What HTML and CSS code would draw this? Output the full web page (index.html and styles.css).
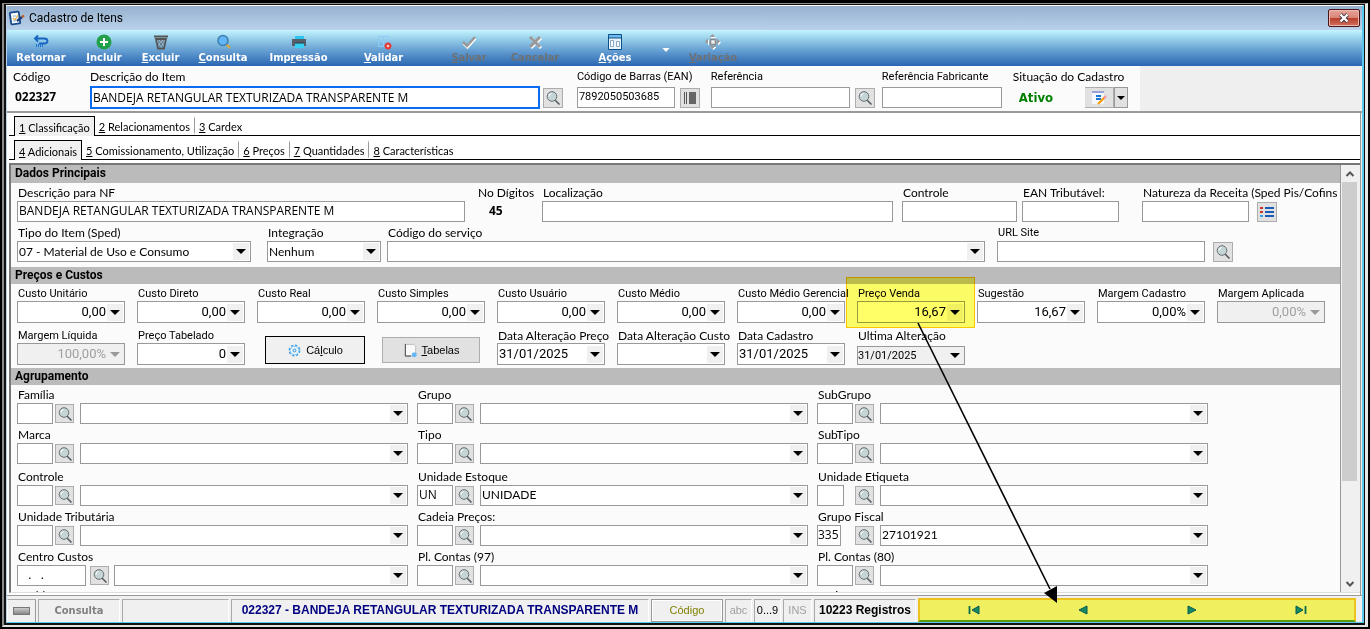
FILE: index.html
```
<!DOCTYPE html>
<html lang="pt-BR">
<head>
<meta charset="utf-8">
<title>Cadastro de Itens</title>
<link rel="stylesheet" href="styles.css">
</head>
<body>
<svg class="defs" aria-hidden="true">
  <symbol id="lens" viewBox="0 0 16 16">
    <path d="M10 10l4.500 4.500" stroke="#50585c" stroke-width="1.500"/>
    <circle cx="7" cy="6.500" r="4.800" fill="#c5d5d6" stroke="#666e70"/>
    <path d="M4 6.500q0-2.500 2.500-3" stroke="#fff" fill="none"/>
  </symbol>
</svg>
<div class="frame">
<div class="window">
  <header class="titlebar">
    <svg class="app-icon" viewBox="0 0 16 16"><rect x="1.500" y="2" width="9" height="12" rx="1" fill="#fff" stroke="#174a8c" stroke-width="1.800" transform="rotate(-8 6 8)"/><path d="M4 8l2 2 3-5" stroke="#e0b040" fill="none" stroke-width="1.200"/><path d="M4 6h3M4 11h3" stroke="#7ab4e6"/><path d="M8 11l5-4" stroke="#1c3f78" stroke-width="2.500"/><path d="M13 7l2-1.500" stroke="#c4612a" stroke-width="2.500"/></svg>
    <h1>Cadastro de Itens</h1>
    <button class="close" aria-label="Fechar"><svg viewBox="0 0 12 10"><path d="M2.500 1.500l7 7M9.500 1.500l-7 7" stroke="#4a3a48" stroke-width="4"/><path d="M2.500 1.500l7 7M9.500 1.500l-7 7" stroke="#fff" stroke-width="2.200"/></svg></button>
  </header>

  <nav class="toolbar">
    <button class="tool w-64"><svg viewBox="0 0 16 16"><path d="M5 1.500L2 4.500l3 3M2 4.500h9q3.500 0 3.500 2.500T11 9.500H6" fill="none" stroke="#1565c0" stroke-width="1.800"/><path d="M3.500 10v3M5.500 10v3M7.500 10v3M9.500 10v3" stroke="#1d6fd0"/></svg><span>Retornar</span></button>
    <button class="tool w-62"><svg viewBox="0 0 16 16"><circle cx="8" cy="8" r="7.500" fill="#23a04a"/><path d="M8 4v8M4 8h8" stroke="#fff" stroke-width="2"/></svg><span><u>I</u>ncluir</span></button>
    <button class="tool w-51"><svg viewBox="0 0 16 16"><path d="M1 2.500h14M3 5l2 9.500h6L13 5z" fill="none" stroke="#555" stroke-width="1.800"/><path d="M5 6l5 7M8 6l3 4M11 6l-5 7M8 6l-3 4" stroke="#777"/></svg><span><u>E</u>xcluir</span></button>
    <button class="tool w-74"><svg viewBox="0 0 16 16"><path d="M11 10l4 4" stroke="#d8a93c" stroke-width="2.200"/><circle cx="8" cy="6.500" r="5" fill="#62b5f6" stroke="#3f7fae" stroke-width="1.500"/></svg><span><u>C</u>onsulta</span></button>
    <button class="tool w-77"><svg viewBox="0 0 16 16"><path d="M4 2h9v4H4z" fill="#29c5ee"/><path d="M1 5h14v7H1z" fill="#55606a"/><path d="M4 9h9v5H4z" fill="#37d0f3"/><path d="M4 9h9" stroke="#2d3940"/></svg><span>Imp<u>r</u>essão</span></button>
    <button class="tool w-93"><svg viewBox="0 0 16 16"><path d="M2.500 2.500h5v5h-5zM7.500 2.500h5v5h-5zM2.500 7.500h5v5h-5z" fill="none" stroke="#90caf9"/><path d="M12 8.500v7M8.500 12h7M9.500 9.500l5 5M14.500 9.500l-5 5" stroke="#e53935" stroke-width="2"/><circle cx="12" cy="12" r="1.300" fill="#ffcbc5"/></svg><span><u>V</u>alidar</span></button>
    <button class="tool w-78" disabled><svg viewBox="0 0 16 16"><path d="M2.500 9.500l4 4 8-9" fill="none" stroke="#fff" stroke-width="2.500"/><path d="M2 8l4 4 8-9" fill="none" stroke="#999" stroke-width="2.500"/></svg><span><u>S</u>alvar</span></button>
    <button class="tool w-54" disabled><svg viewBox="0 0 16 16"><path d="M4 4l10 10M14 4L4 14" stroke="#fff" stroke-width="3"/><path d="M3 3l10 10M13 3L3 13" stroke="#999" stroke-width="3"/></svg><span>Cancelar</span></button>
    <button class="tool w-106"><svg viewBox="0 0 16 16"><path d="M1.500 .5h13v15h-13z" fill="#e9f4fd" stroke="#0b4f87"/><path d="M2 1h12v3H2z" fill="#70b9f0"/><path d="M1 4h14" stroke="#0b4f87"/><path d="M3.500 6.500h3v6h-3zM9.500 7.500h3v5h-3z" fill="#fff" stroke="#89a9c2"/></svg><span><u>A</u>ções</span></button>
    <button class="caret" aria-label="Mais ações"></button>
    <button class="tool w-82" disabled><svg viewBox="0 0 16 16"><path d="M8.500 1l3 3h-6zM8.500 16l3-3h-6zM1 8.500l3-3v6zM16 8.500l-3-3v6z" fill="#fff"/><path d="M7.500 0l3 3h-6zM7.500 15l3-3h-6zM0 7.500l3-3v6zM15 7.500l-3-3v6z" fill="#999"/><path d="M5.500 5.500h5v5h-5z" fill="#eee" stroke="#8a8a8a" stroke-width="1.500"/></svg><span><u>V</u>ariação</span></button>
  </nav>

  <section class="item-head">
    <div class="head-grid">
      <div class="field"><span class="label">Código</span><strong class="code">022327</strong></div>
      <div class="field pr-14"><label for="desc">Descrição do Item</label><div class="line gap-3"><input id="desc" class="grow focus" value="BANDEJA RETANGULAR TEXTURIZADA TRANSPARENTE M"><button class="icon-btn" aria-label="Buscar"><svg><use href="#lens"/></svg></button></div></div>
      <div class="field pr-11"><label for="ean" class="tah">Código de Barras (EAN)</label><div class="line gap-5"><input id="ean" class="grow small" value="7892050503685"><button class="icon-btn" aria-label="Código de barras"><svg viewBox="0 0 16 16"><path d="M2.500 2v12M4.500 2v12" stroke="#555"/><path d="M7 2h7v12H7z" fill="#666"/></svg></button></div></div>
      <div class="field pr-7"><label for="ref" class="tah">Referência</label><div class="line gap-5"><input id="ref" class="grow"><button class="icon-btn" aria-label="Buscar"><svg><use href="#lens"/></svg></button></div></div>
      <div class="field pr-10"><label for="fab" class="tah">Referência Fabricante</label><input id="fab"></div>
      <div class="field pr-12"><span class="label">Situação do Cadastro</span><div class="line status-line"><strong class="active">Ativo</strong><button class="edit-btn" aria-label="Alterar"><svg viewBox="0 0 16 16"><path d="M1 1h12v13H1z" fill="#f3f6fb"/><path d="M1 2h12" stroke="#3f51b5"/><path d="M5 6h5M5 9h5" stroke="#1976d2" stroke-width="2"/><path d="M7 14l7-7" stroke="#ff9800" stroke-width="2"/><path d="M13 8l2-2" stroke="#f48fb1" stroke-width="2"/></svg></button><button class="drop-btn" aria-label="Opções"></button></div></div>
    </div>
  </section>

  <div class="body">
    <nav class="tabs"><button class="tab on"><u>1</u> Classificação</button><button class="tab"><u>2</u> Relacionamentos</button><button class="tab"><u>3</u> Cardex</button></nav>
    <nav class="tabs second"><button class="tab on"><u>4</u> Adicionais</button><button class="tab"><u>5</u> Comissionamento, Utilização</button><button class="tab"><u>6</u> Preços</button><button class="tab"><u>7</u> Quantidades</button><button class="tab"><u>8</u> Características</button></nav>

    <div class="panel">
      <form class="sheet">
        <h2 class="tall">Dados Principais</h2>
        <div class="rows main-rows">
          <div class="row r-main">
            <div class="field pr-12"><label for="nf">Descrição para NF</label><input id="nf" value="BANDEJA RETANGULAR TEXTURIZADA TRANSPARENTE M"></div>
            <div class="field"><span class="label">No Dígitos</span><strong class="digits">45</strong></div>
            <div class="field pr-9"><label for="loc">Localização</label><input id="loc"></div>
            <div class="field pr-5"><label for="ctl">Controle</label><input id="ctl"></div>
            <div class="field pr-23"><label for="eant">EAN Tributável:</label><input id="eant"></div>
            <div class="field pr-63"><label for="nat">Natureza da Receita (Sped Pis/Cofins</label><div class="line gap-8"><input id="nat" class="grow"><button type="button" class="icon-btn" aria-label="Lista"><svg viewBox="0 0 16 16"><path d="M6 4h9M6 8h9M6 12h9" stroke="#1a5cb8" stroke-width="2"/><path d="M1 4h3M1 8h3" stroke="#cc3322" stroke-width="2"/><path d="M1 12h3" stroke="#33a1e8" stroke-width="2"/></svg></button></div></div>
          </div>
          <div class="row r-type">
            <div class="field pr-16"><label for="tipo">Tipo do Item (Sped)</label><select id="tipo" class="txt"><option>07 - Material de Uso e Consumo</option></select></div>
            <div class="field pr-6"><label for="integ">Integração</label><select id="integ" class="txt"><option>Nenhum</option></select></div>
            <div class="field pr-12"><label for="serv">Código do serviço</label><select id="serv"><option></option></select></div>
            <div class="field pr-107"><label for="url" class="tah">URL Site</label><div class="line gap-8"><input id="url" class="grow"><button type="button" class="icon-btn" aria-label="Buscar"><svg><use href="#lens"/></svg></button></div></div>
          </div>
        </div>

        <h2>Preços e Custos</h2>
        <div class="rows price-rows">
          <div class="row r-price">
            <div class="field pr-12"><label class="tah" for="p1">Custo Unitário</label><select class="num" id="p1"><option>0,00</option></select></div>
            <div class="field pr-12"><label class="tah" for="p2">Custo Direto</label><select class="num" id="p2"><option>0,00</option></select></div>
            <div class="field pr-12"><label class="tah" for="p3">Custo Real</label><select class="num" id="p3"><option>0,00</option></select></div>
            <div class="field pr-12"><label class="tah" for="p4">Custo Simples</label><select class="num" id="p4"><option>0,00</option></select></div>
            <div class="field pr-12"><label class="tah" for="p5">Custo Usuário</label><select class="num" id="p5"><option>0,00</option></select></div>
            <div class="field pr-12"><label class="tah" for="p6">Custo Médio</label><select class="num" id="p6"><option>0,00</option></select></div>
            <div class="field pr-12"><label class="tah" for="p7">Custo Médio Gerencial</label><select class="num" id="p7"><option>0,00</option></select></div>
            <div class="field pr-12 marked"><label class="tah" for="p8">Preço Venda</label><select class="num" id="p8"><option>16,67</option></select></div>
            <div class="field pr-12"><label class="tah" for="p9">Sugestão</label><select class="num" id="p9"><option>16,67</option></select></div>
            <div class="field pr-12"><label class="tah" for="p10">Margem Cadastro</label><select class="num" id="p10"><option>0,00%</option></select></div>
            <div class="field pr-12"><label class="tah" for="p11">Margem Aplicada</label><select class="num" id="p11" disabled><option>0,00%</option></select></div>
          </div>
          <div class="row r-price">
            <div class="field pr-12"><label class="tah" for="q1">Margem Líquida</label><select class="num" id="q1" disabled><option>100,00%</option></select></div>
            <div class="field pr-12"><label class="tah" for="q2">Preço Tabelado</label><select class="num" id="q2"><option>0</option></select></div>
            <div class="btn-cell"><button type="button" class="push default"><svg viewBox="0 0 16 16"><circle cx="8" cy="8" r="5.500" fill="#e8f5fd" stroke="#3c9de0" stroke-width="1.600" stroke-dasharray="2.500 1.800"/><circle cx="8" cy="8" r="4.500" fill="none" stroke="#8cc8f0"/><circle cx="8" cy="8" r="1.500" fill="none" stroke="#2b8ad2"/></svg><span>Cá<u>l</u>culo</span></button></div>
            <div class="btn-cell"><button type="button" class="push"><svg viewBox="0 0 16 16"><path d="M2.500 1.500h9l2 2v9l-3 1h-8z" fill="#fafafa" stroke="#bbb"/><path d="M2.500 1v13h6" fill="none" stroke="#444"/><path d="M12 10v5M9.500 12.500h5" stroke="#64b5f6" stroke-width="3"/></svg><span><u>T</u>abelas</span></button></div>
            <div class="field pr-12"><label for="d1">Data Alteração Preço</label><select class="date" id="d1"><option>31/01/2025</option></select></div>
            <div class="field pr-12"><label for="d2">Data Alteração Custo</label><select class="date" id="d2"><option></option></select></div>
            <div class="field pr-12"><label for="d3">Data Cadastro</label><select class="date" id="d3"><option>31/01/2025</option></select></div>
            <div class="field pr-12 bottom"><label for="d4">Ultima Alteração</label><select class="ro" id="d4"><option>31/01/2025</option></select></div>
          </div>
        </div>

        <h2>Agrupamento</h2>
        <div class="rows group-rows">
          <div class="row r-group">
            <div class="field pr-9"><label for="g1">Família</label><div class="line"><input class="key" id="g1"><button type="button" class="icon-btn sm" aria-label="Buscar"><svg><use href="#lens"/></svg></button><select class="grow" aria-label="Família"><option></option></select></div></div>
            <div class="field pr-9"><label for="g2">Grupo</label><div class="line"><input class="key" id="g2"><button type="button" class="icon-btn sm" aria-label="Buscar"><svg><use href="#lens"/></svg></button><select class="grow" aria-label="Grupo"><option></option></select></div></div>
            <div class="field"><label for="g3">SubGrupo</label><div class="line"><input class="key" id="g3"><button type="button" class="icon-btn sm" aria-label="Buscar"><svg><use href="#lens"/></svg></button><select class="grow" aria-label="SubGrupo"><option></option></select></div></div>
          </div>
          <div class="row r-group">
            <div class="field pr-9"><label for="g4">Marca</label><div class="line"><input class="key" id="g4"><button type="button" class="icon-btn sm" aria-label="Buscar"><svg><use href="#lens"/></svg></button><select class="grow" aria-label="Marca"><option></option></select></div></div>
            <div class="field pr-9"><label for="g5">Tipo</label><div class="line"><input class="key" id="g5"><button type="button" class="icon-btn sm" aria-label="Buscar"><svg><use href="#lens"/></svg></button><select class="grow" aria-label="Tipo"><option></option></select></div></div>
            <div class="field"><label for="g6">SubTipo</label><div class="line"><input class="key" id="g6"><button type="button" class="icon-btn sm" aria-label="Buscar"><svg><use href="#lens"/></svg></button><select class="grow" aria-label="SubTipo"><option></option></select></div></div>
          </div>
          <div class="row r-group apart">
            <div class="field pr-9"><label for="g7">Controle</label><div class="line"><input class="key" id="g7"><button type="button" class="icon-btn sm" aria-label="Buscar"><svg><use href="#lens"/></svg></button><select class="grow" aria-label="Controle"><option></option></select></div></div>
            <div class="field pr-9"><label for="g8">Unidade Estoque</label><div class="line"><input class="key" id="g8" value="UN"><button type="button" class="icon-btn sm" aria-label="Buscar"><svg><use href="#lens"/></svg></button><select class="grow" aria-label="Unidade Estoque"><option>UNIDADE</option></select></div></div>
            <div class="field"><label for="g9">Unidade Etiqueta</label><div class="line"><input class="key k27" id="g9"><button type="button" class="icon-btn sm" aria-label="Buscar"><svg><use href="#lens"/></svg></button><select class="grow" aria-label="Unidade Etiqueta"><option></option></select></div></div>
          </div>
          <div class="row r-group">
            <div class="field pr-9"><label for="g10">Unidade Tributária</label><div class="line"><input class="key" id="g10"><button type="button" class="icon-btn sm" aria-label="Buscar"><svg><use href="#lens"/></svg></button><select class="grow" aria-label="Unidade Tributária"><option></option></select></div></div>
            <div class="field pr-9"><label for="g11">Cadeia Preços:</label><div class="line"><input class="key" id="g11"><button type="button" class="icon-btn sm" aria-label="Buscar"><svg><use href="#lens"/></svg></button><select class="grow" aria-label="Cadeia Preços"><option></option></select></div></div>
            <div class="field"><label for="g12">Grupo Fiscal</label><div class="line"><input class="key k24" id="g12" value="335"><button type="button" class="icon-btn sm" aria-label="Buscar"><svg><use href="#lens"/></svg></button><select class="grow" aria-label="Grupo Fiscal"><option>27101921</option></select></div></div>
          </div>
          <div class="row r-group">
            <div class="field pr-9"><label for="g13">Centro Custos</label><div class="line"><input class="key k69" id="g13" value="   .   ."><button type="button" class="icon-btn sm" aria-label="Buscar"><svg><use href="#lens"/></svg></button><select class="grow" aria-label="Centro Custos"><option></option></select></div></div>
            <div class="field pr-9"><label for="g14">Pl. Contas (97)</label><div class="line"><input class="key" id="g14"><button type="button" class="icon-btn sm" aria-label="Buscar"><svg><use href="#lens"/></svg></button><select class="grow" aria-label="Pl. Contas (97)"><option></option></select></div></div>
            <div class="field"><label for="g15">Pl. Contas (80)</label><div class="line"><input class="key" id="g15"><button type="button" class="icon-btn sm" aria-label="Buscar"><svg><use href="#lens"/></svg></button><select class="grow" aria-label="Pl. Contas (80)"><option></option></select></div></div>
          </div>
          <div class="row r-group next">
            <div class="field"><span class="label">Moldura</span></div><div></div><div class="field"><span class="label">Série</span></div>
          </div>
        </div>
      </form>
      <div class="scroll">
        <button aria-label="Subir"><svg viewBox="0 0 10 8"><path d="M1.500 6L5 2.500 8.500 6" fill="none" stroke="#555" stroke-width="2"/></svg></button>
        <div class="track"><div class="thumb"></div></div>
        <button aria-label="Descer"><svg viewBox="0 0 10 8"><path d="M1.500 2L5 5.500 8.500 2" fill="none" stroke="#555" stroke-width="2"/></svg></button>
      </div>
    </div>
  </div>

  <footer class="status">
    <button class="cell led" aria-label="Indicador"><span></span></button>
    <div class="cell mode">Consulta</div>
    <div class="cell blank"></div>
    <div class="cell title">022327 - BANDEJA RETANGULAR TEXTURIZADA TRANSPARENTE M</div>
    <button class="cell order">Código</button>
    <div class="cell c26 dim">abc</div>
    <div class="cell c26">0...9</div>
    <div class="cell c28 dim">INS</div>
    <div class="cell count">10223 Registros</div>
    <nav class="pager">
      <button aria-label="Primeiro"><svg viewBox="0 0 12 10"><path d="M1.500 1v8" stroke="#0b6b50" stroke-width="1.800"/><path d="M11 1v8L4 5z" fill="#138a62" stroke="#0b5a55"/></svg></button>
      <button aria-label="Anterior"><svg viewBox="0 0 12 10"><path d="M10 1v8L2 5z" fill="#138a62" stroke="#0b5a55"/></svg></button>
      <button aria-label="Próximo"><svg viewBox="0 0 12 10"><path d="M2 1v8l8-4z" fill="#138a62" stroke="#0b5a55"/></svg></button>
      <button aria-label="Último"><svg viewBox="0 0 12 10"><path d="M10.500 1v8" stroke="#0b6b50" stroke-width="1.800"/><path d="M1 1v8l7-4z" fill="#138a62" stroke="#0b5a55"/></svg></button>
    </nav>
  </footer>
</div>
</div>
<svg class="pointer" viewBox="0 0 1370 629" preserveAspectRatio="none" aria-hidden="true"><path d="M918 323l132 266" stroke="#000" stroke-width="1.600"/><path d="M1057 603L1044 593l13-7z"/></svg>
</body>
</html>
```
FILE: styles.css
```
* { box-sizing: border-box; }

body {
  margin: 0;
  height: 100vh;
  overflow: hidden;
  position: relative;
  background: #000;
  padding: 3px 2px 2px;
  color: #000;
  font: 12px/16px Lato, "Open Sans", sans-serif;
}

button, input, select { font: inherit; color: inherit; margin: 0; border-radius: 0; }
button { padding: 0; border: 0; background: none; }
h1, h2 { margin: 0; font-size: 12px; }
.defs { position: absolute; width: 0; height: 0; }

/* Window frame */
.frame {
  height: 100%;
  padding: 1px 1px 2px 2px;
  background: #111;
  border: solid #8a8a8a;
  border-width: 1px 3px 2px 2px;
  border-right-color: #e8e8e8;
  border-bottom-color: #dfe6df;
}
.window {
  height: 100%;
  display: flex;
  flex-direction: column;
  border: solid #58c8ee;
  border-width: 1px 2px 1px 1px;
  border-top-color: #fff;
  border-left-color: #b9d1ea;
  background: #f0f0f0;
}

/* Title bar */
.titlebar {
  height: 24px;
  flex: none;
  display: flex;
  align-items: center;
  padding: 0 2px;
  background: linear-gradient(#97b1cf, #b9d1ea);
}
.app-icon { width: 16px; height: 16px; }
.titlebar h1 { flex: 1; font-family: Roboto, sans-serif; font-weight: 400; padding-left: 4px; }
.close {
  width: 32px;
  height: 18px;
  border: 1px solid #4a1418;
  border-radius: 2px;
  background: linear-gradient(#e6a59c, #d98276 50%, #b93c2c 50%, #d0705c);
  box-shadow: inset 0 0 0 1px #e9b9b0;
}
.close svg { width: 12px; height: 10px; display: block; margin: 0 auto; }

/* Toolbar */
.toolbar {
  height: 36px;
  flex: none;
  display: flex;
  padding-left: 2px;
  background: linear-gradient(#c3f6ff, #86bfe2 35%, #5a94cc 65%, #2a66b2);
}
.tool {
  flex: none;
  display: flex;
  flex-direction: column;
  align-items: center;
  padding-top: 4px;
  color: #fff;
  font: bold 11px/16px "DejaVu Sans Condensed", "DejaVu Sans", sans-serif;
}
.tool svg { width: 16px; height: 16px; }
.tool:disabled { color: #6c7074; }
.w-51 { width: 51px; } .w-54 { width: 54px; } .w-62 { width: 62px; } .w-64 { width: 64px; }
.w-74 { width: 74px; } .w-77 { width: 77px; } .w-78 { width: 78px; } .w-82 { width: 82px; }
.w-93 { width: 93px; } .w-106 { width: 106px; }
.w-106 + .caret { margin-left: -8px; }
.caret {
  width: 12px;
  align-self: center;
  height: 4px;
  margin-top: 4px;
  background: #fff;
  clip-path: polygon(20% 0, 80% 0, 50% 100%);
}

/* Fields */
.field { min-width: 0; }
label, .label {
  display: block;
  height: 16px;
  padding-left: 1px;
  white-space: nowrap;
}
input, select {
  display: block;
  width: 100%;
  height: 21px;
  border: 1px solid #999;
  background: #fff;
  padding: 0 1px 2px;
  outline: 0;
  min-width: 0;
}
input { font-family: "Open Sans", "Noto Sans", sans-serif; }
.tah, .small { font-family: Roboto, "Open Sans", sans-serif; font-size: 11px; }
.small { font-size: 11px; }
select {
  appearance: none;
  padding-right: 22px;
  background:
    url("data:image/svg+xml,%3Csvg xmlns='http://www.w3.org/2000/svg' width='10' height='5'%3E%3Cpath d='M0 0h10L5 5z'/%3E%3C/svg%3E") no-repeat right 4px center,
    linear-gradient(#f0f0f0, #f0f0f0) no-repeat right 1px center / 16px 17px,
    #fff;
}
select.num { text-align: right; text-align-last: right; padding-right: 18px; }
select.num, select.date { height: 22px; font-family: Roboto, sans-serif; font-size: 13px; padding-bottom: 0; }
select.txt { padding-bottom: 0; }
select:disabled {
  color: #a0a0a0;
  opacity: 1;
  background:
    url("data:image/svg+xml,%3Csvg xmlns='http://www.w3.org/2000/svg' width='10' height='5'%3E%3Cpath fill='%23999' d='M0 0h10L5 5z'/%3E%3C/svg%3E") no-repeat right 4px center,
    #f0f0f0;
}
select.ro { height: 19px; margin-top: 3px; padding: 0 20px 0 0; background-color: #f0f0f0; font-family: Roboto, sans-serif; font-size: 11px; }
.line { display: flex; align-items: center; }
.line .grow { flex: 1; width: 0; }
.gap-3 { gap: 3px; } .gap-5 { gap: 5px; } .gap-8 { gap: 8px; }
.pr-5 { padding-right: 5px; } .pr-6 { padding-right: 6px; } .pr-7 { padding-right: 7px; }
.pr-9 { padding-right: 9px; } .pr-10 { padding-right: 10px; } .pr-11 { padding-right: 11px; }
.pr-12 { padding-right: 12px; } .pr-14 { padding-right: 14px; } .pr-16 { padding-right: 16px; }
.pr-23 { padding-right: 23px; } .pr-63 { padding-right: 63px; } .pr-107 { padding-right: 107px; }
.icon-btn {
  flex: none;
  width: 20px;
  height: 20px;
  border: 1px solid #adadad;
  background: #e1e1e1;
}
.icon-btn svg { display: block; width: 16px; height: 16px; margin: 0 auto; }
.icon-btn.sm { width: 19px; height: 19px; }

/* Item header */
.item-head {
  flex: none;
  height: 47px;
  display: flex;
  background: #efefef;
  border-bottom: 2px solid #999;
}
.head-grid {
  width: 83.6%;
  padding: 3px 0 0 5px;
  display: grid;
  grid-template-columns: 78fr 487fr 134fr 171fr 130fr 128fr;
  background: #fbfbfb;
}
.head-grid label, .head-grid .label { height: 18px; }
.head-grid label { padding-left: 0; }
.focus { border: 2px solid #0a6cf0; height: 23px; margin-top: -1px; padding: 0 1px 1px; }
.code { display: block; padding: 2px 0 0 3px; font: bold 12px/16px "Open Sans", sans-serif; }
.active { color: #008000; font: bold 13px/16px "DejaVu Sans Condensed", sans-serif; flex: 1; padding-left: 7px; }
.edit-btn { width: 29px; height: 21px; border: solid #adadad; border-width: 1px 1px 1px 0; background: #e1e1e1; }
.edit-btn svg { display: block; width: 16px; height: 16px; margin: 0 auto; }
.drop-btn {
  width: 14px; height: 21px; border: 1px solid #999;
  background: url("data:image/svg+xml,%3Csvg xmlns='http://www.w3.org/2000/svg' width='8' height='4'%3E%3Cpath d='M0 0h8L4 4z'/%3E%3C/svg%3E") no-repeat center, #e1e1e1;
}

/* Tabs */
.body {
  flex: 1;
  min-height: 0;
  display: flex;
  flex-direction: column;
  margin-right: 1px;
  padding: 3px 0 0 2px;
  border-right: 1px solid #999;
  background: #fff;
}
.tabs { flex: none; height: 20px; display: flex; padding-left: 5px; border-bottom: 1px solid #000; }
.tabs.second { margin-top: 4px; }
.tab {
  height: 19px;
  padding: 0 4px;
  border: solid #fff;
  border-width: 3px 1px 3px 0;
  border-right-color: #999;
  font: 11px/15px Lato, "Liberation Sans", sans-serif;
}
.tab:last-child { border-right: 0; }
.tab.on { height: 20px; border: 1px solid #000; border-bottom: 0; background: #f0f0f0; padding-top: 1px; }

/* Scrollable sheet */
.panel {
  flex: 1;
  min-height: 0;
  display: flex;
  margin: 3px 0 2px;
  border: solid #777;
  border-width: 2px 0 1px 2px;
  border-bottom-color: #ddd;
  padding-right: 3px;
  background: #f0f0f0;
}
.sheet { flex: 1; min-width: 0; overflow: hidden; border-right: 1px solid #999; background: #fbfbfb; }
h2 { height: 17px; padding-left: 4px; background: #bbb; font-family: Roboto, sans-serif; line-height: 16px; }
h2.tall { height: 18px; }
.rows { padding-left: 6px; }
.main-rows { padding-top: 2px; padding-bottom: 5px; }
.price-rows { padding-top: 1px; padding-bottom: 3px; }
.price-rows label { line-height: 18px; }
.group-rows { padding-top: 2px; }
.row { display: grid; margin-bottom: 3px; }
.row:last-child { margin-bottom: 0; }
.row.apart { margin-top: 5px; }
.row.next .label { line-height: 14px; }
.price-rows .row:first-child { margin-bottom: 4px; }
.r-main { grid-template-columns: 460fr 65fr 360fr 120fr 120fr 198fr; }
.r-type { grid-template-columns: 250fr 120fr 610fr 343fr; }
.r-price { grid-template-columns: repeat(11, 120fr) 3fr; }
.r-group { grid-template-columns: 400fr 400fr 391fr 132fr; }
.digits { display: block; padding: 2px 0 0 12px; font: bold 12px/16px "Open Sans", sans-serif; }
.btn-cell { display: flex; align-items: flex-end; padding: 0 12px 1px 8px; }
.btn-cell + .btn-cell { padding-left: 5px; padding-right: 17px; padding-bottom: 2px; }
.push {
  flex: 1; height: 26px; display: flex; align-items: center; justify-content: center; gap: 4px;
  border: 1px solid #adadad; background: #e1e1e1;
  font: 11px/14px "Liberation Sans", Arial, sans-serif;
}
.push.default { height: 28px; border-color: #000; background: #f0f0f0; }
.push svg { width: 15px; height: 15px; }
.key { flex: none; width: 36px; margin-right: 2px; }
.key + .icon-btn { margin-right: 6px; }
.k24 { width: 24px; margin-right: 14px; padding: 0 0 2px; }
.k27 { width: 27px; margin-right: 11px; }
.k69 { width: 69px; margin-right: 4px; }
.k69 + .icon-btn { margin-right: 5px; }

.marked { position: relative; }
.marked::after {
  content: "";
  position: absolute;
  inset: -8px 2px -5px -11px;
  border: 1px solid #ffc800;
  background: #ffff66;
  mix-blend-mode: multiply;
}

.scroll { width: 16px; flex: none; display: flex; flex-direction: column; background: #f0f0f0; padding-left: 1px; }
.scroll button { height: 17px; }
.scroll svg { display: block; width: 10px; height: 8px; margin: 0 auto; }
.track { flex: 1; }
.thumb { height: 76%; background: #cdcdcd; }

/* Status bar */
.status { flex: none; display: flex; gap: 2px; height: 27px; padding: 2px 6px 0 0; background: #f0f0f0; border-top: 1px solid #999; color: #000; }
.cell {
  flex: none; border: solid #aaa; border-width: 1px 1px 0 1px; border-right-color: #fff; margin-top: 1px;
  font: 11px/21px "Liberation Sans", Arial, sans-serif; white-space: nowrap; text-align: center;
}
.led { width: 29px; border-right-color: #999; border-left-color: #fff; }
.led span { display: block; width: 17px; height: 8px; margin: 0 auto; border: 1px solid #777; background: linear-gradient(#ccc, #888); }
.mode { width: 82px; color: #808080; font: bold 11px/21px "DejaVu Sans Condensed", sans-serif; }
.blank { width: 107px; }
.title { flex: 1; color: #000080; font-weight: bold; font-size: 12px; overflow: hidden; }
.order { width: 72px; color: #808000; border: 1px solid #999; box-shadow: inset 0 0 0 1px #fff; }
.c26 { width: 27px; }
.c28 { width: 29px; }
.dim { color: #a0a0a0; }
.count { width: 102px; font-weight: bold; font-size: 12px; }
.pager { width: 438px; display: flex; gap: 2px; background: #efef5f; border: 2px solid #ecc31c; border-bottom-color: #5a9a10; }
.pager button { flex: 1; }
.pager svg { display: block; width: 12px; height: 10px; margin: 0 auto; }

.pointer { position: absolute; left: 0; top: 0; width: 100%; height: 100%; pointer-events: none; }
```
